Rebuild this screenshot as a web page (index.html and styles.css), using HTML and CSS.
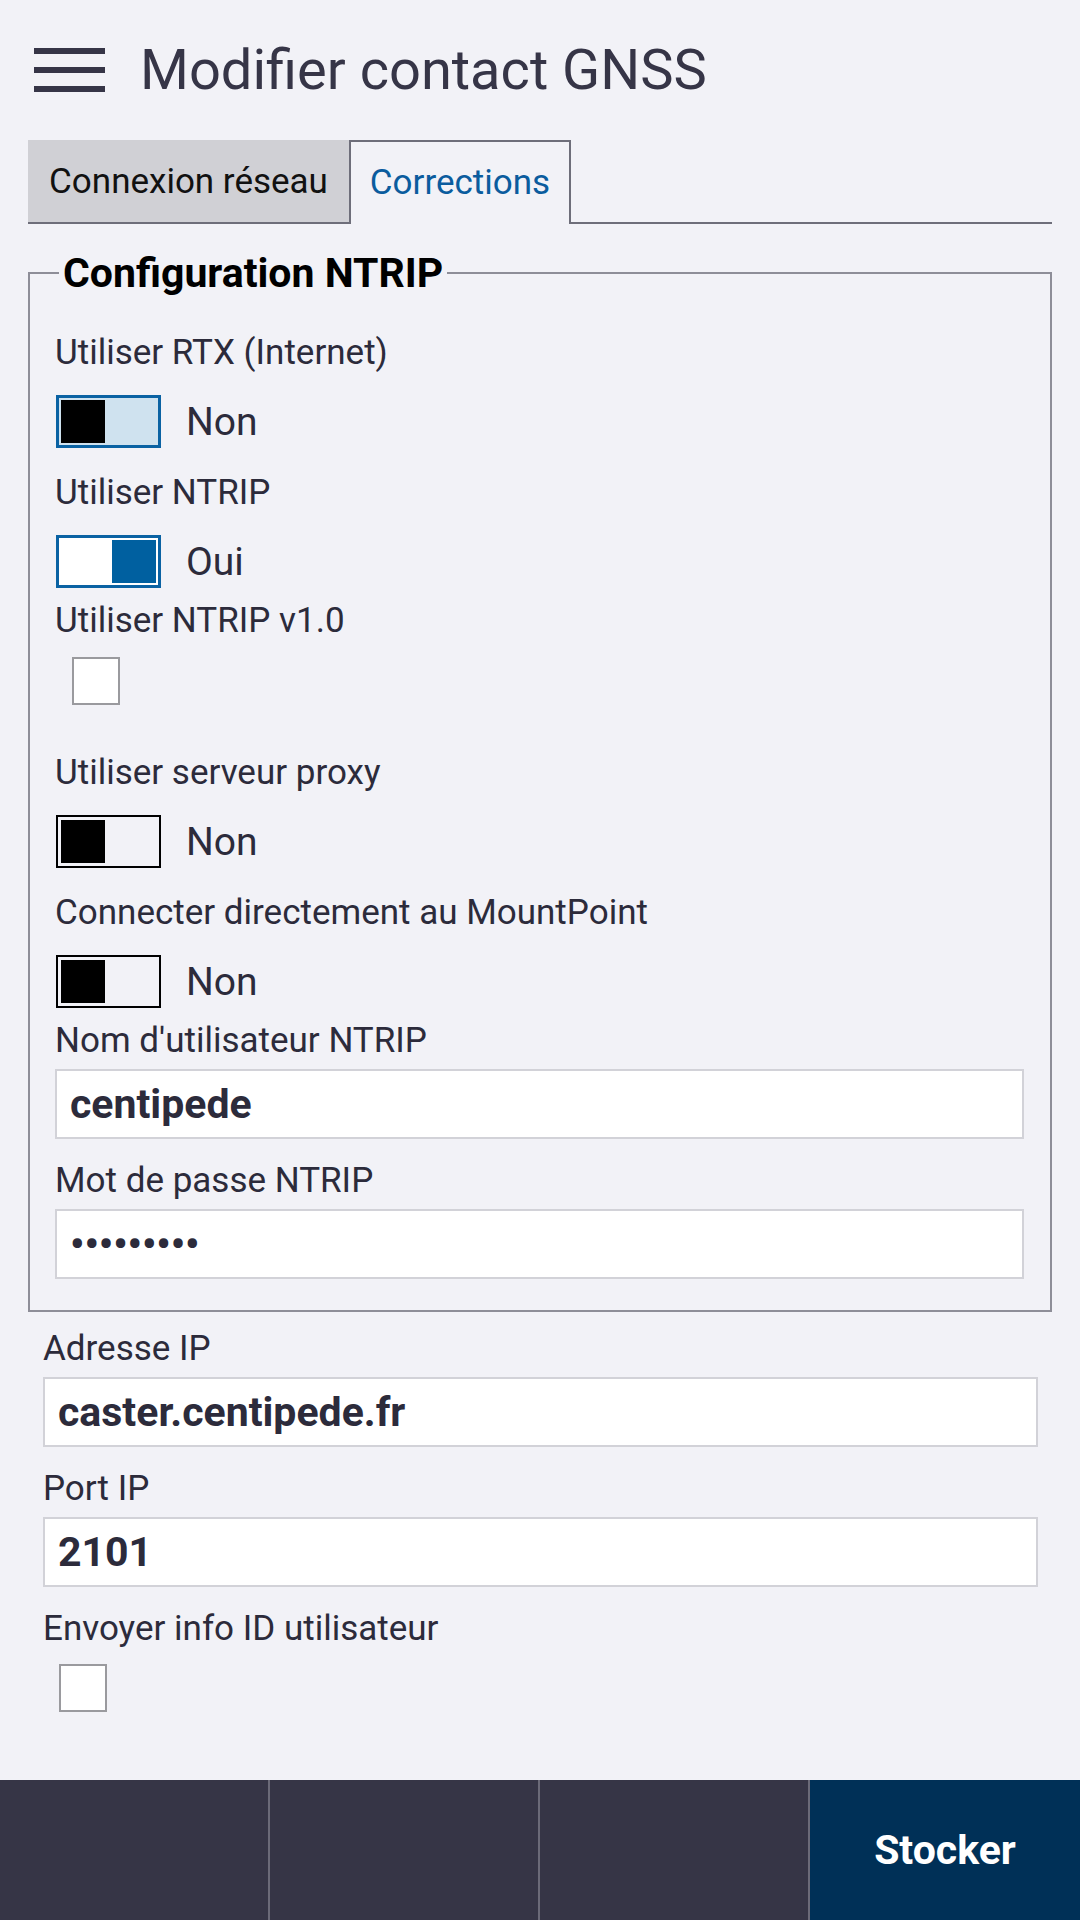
FILE: index.html
```html
<!DOCTYPE html>
<html lang="fr">
<head>
<meta charset="utf-8">
<title>Modifier contact GNSS</title>
<link rel="stylesheet" href="styles.css">
</head>
<body>
<div class="page">
  <div class="main">
    <header class="header">
      <div class="hamburger"><span></span><span></span><span></span></div>
      <h1 class="title">Modifier contact GNSS</h1>
    </header>
    <nav class="tabs">
      <div class="tab tab-inactive">Connexion réseau</div>
      <div class="tab tab-active">Corrections</div>
    </nav>
    <fieldset class="group">
      <legend class="legend">Configuration NTRIP</legend>
      <div class="field first">
        <div class="label">Utiliser RTX (Internet)</div>
        <div class="toggle-row">
          <div class="toggle toggle-focus"><span class="knob"></span></div>
          <span class="toggle-text">Non</span>
        </div>
      </div>
      <div class="field">
        <div class="label">Utiliser NTRIP</div>
        <div class="toggle-row">
          <div class="toggle toggle-on"><span class="knob"></span></div>
          <span class="toggle-text">Oui</span>
        </div>
      </div>
      <div class="field tight">
        <div class="label">Utiliser NTRIP v1.0</div>
        <div class="check-row"><span class="checkbox"></span></div>
      </div>
      <div class="field loose">
        <div class="label">Utiliser serveur proxy</div>
        <div class="toggle-row">
          <div class="toggle"><span class="knob"></span></div>
          <span class="toggle-text">Non</span>
        </div>
      </div>
      <div class="field">
        <div class="label">Connecter directement au MountPoint</div>
        <div class="toggle-row">
          <div class="toggle"><span class="knob"></span></div>
          <span class="toggle-text">Non</span>
        </div>
      </div>
      <div class="field tight">
        <div class="label">Nom d'utilisateur NTRIP</div>
        <div class="input">centipede</div>
      </div>
      <div class="field input-field">
        <div class="label">Mot de passe NTRIP</div>
        <div class="input"><span class="dots">•••••••••</span></div>
      </div>
    </fieldset>
    <section class="outside">
      <div class="field first-out">
        <div class="label">Adresse IP</div>
        <div class="input">caster.centipede.fr</div>
      </div>
      <div class="field input-field">
        <div class="label">Port IP</div>
        <div class="input">2101</div>
      </div>
      <div class="field input-field">
        <div class="label">Envoyer info ID utilisateur</div>
        <div class="check-row check-row-out"><span class="checkbox"></span></div>
      </div>
    </section>
  </div>
  <footer class="bottombar">
    <div class="cell"></div>
    <div class="cell"></div>
    <div class="cell"></div>
    <div class="cell cell-primary">Stocker</div>
  </footer>
</div>
</body>
</html>
```
FILE: styles.css
```css
html, body {
  margin: 0;
  padding: 0;
}
body {
  background: #f2f2f7;
  font-family: Roboto, "Noto Sans", "Liberation Sans", sans-serif;
  color: #2c2b3b;
}
.page {
  width: 1080px;
  height: 1920px;
  display: flex;
  flex-direction: column;
  overflow: hidden;
}
.main {
  flex: 1;
}
.header {
  height: 140px;
  display: flex;
  align-items: center;
  padding-left: 34px;
  box-sizing: border-box;
}
.hamburger {
  width: 71px;
  height: 44px;
  display: flex;
  flex-direction: column;
  justify-content: space-between;
}
.hamburger span {
  display: block;
  height: 6px;
  background: #363547;
}
.title {
  margin: 0 0 0 35px;
  font-size: 56px;
  font-weight: 400;
  line-height: 64px;
  color: #363547;
}
.tabs {
  display: flex;
  margin: 0 28px;
  height: 84px;
  box-sizing: border-box;
  border-bottom: 2px solid #6e6e7a;
}
.tab {
  height: 82px;
  box-sizing: border-box;
  display: flex;
  align-items: center;
  justify-content: center;
  font-size: 35px;
}
.tab-inactive {
  width: 321px;
  background: #d0d0d5;
  color: #111111;
}
.tab-active {
  width: 222px;
  height: 84px;
  margin-bottom: -2px;
  border: 2px solid #6e6e7a;
  border-bottom: none;
  background: #f2f2f7;
  color: #0b5c9e;
  padding-bottom: 2px;
}
.group {
  margin: 26px 28px 0;
  border: 2px solid #8e8e98;
  padding: 0 26px 31px 25px;
  min-width: 0;
}
.legend {
  font-size: 41px;
  line-height: 46px;
  font-weight: 700;
  color: #000000;
  padding: 0 4px;
  margin-left: 4px;
}
.label {
  font-size: 35px;
  line-height: 41px;
  color: #2c2b3b;
  white-space: nowrap;
}
.field {
  margin-top: 24px;
}
.field.first {
  margin-top: 36px;
}
.field.tight {
  margin-top: 12px;
}
.field.loose {
  margin-top: 48px;
}
.field.input-field {
  margin-top: 21px;
}
.field.first-out {
  margin-top: 16px;
}
.toggle-row {
  display: flex;
  align-items: center;
  height: 53px;
  margin-top: 22px;
  padding-left: 1px;
}
.toggle {
  width: 105px;
  height: 53px;
  box-sizing: border-box;
  border: 2px solid #000000;
  padding: 3px;
  display: flex;
  justify-content: flex-start;
  align-items: stretch;
}
.knob {
  display: block;
  width: 44px;
  background: #000000;
}
.toggle-focus {
  border: 3px solid #0a62a3;
  background: #cfe2ef;
  padding: 2px;
}
.toggle-on {
  border: 3px solid #0a62a3;
  background: #ffffff;
  padding: 2px;
  justify-content: flex-end;
}
.toggle-on .knob {
  background: #0060a0;
}
.toggle-text {
  margin-left: 25px;
  font-size: 39px;
  color: #2c2b3b;
}
.check-row {
  margin-top: 16px;
  padding-left: 17px;
  height: 47px;
}
.check-row-out {
  margin-top: 15px;
  padding-left: 16px;
}
.checkbox {
  display: block;
  width: 48px;
  height: 48px;
  box-sizing: border-box;
  border: 2px solid #9a9a9e;
  background: #ffffff;
}
.input {
  margin-top: 8px;
  height: 70px;
  box-sizing: border-box;
  border: 2px solid #d2d2d8;
  background: #ffffff;
  padding-left: 13px;
  display: flex;
  align-items: center;
  font-size: 41px;
  font-weight: 700;
  color: #2c2b3b;
}
.dots {
  font-size: 40px;
  letter-spacing: 0;
}
.outside {
  padding: 0 42px 0 43px;
}
.bottombar {
  height: 140px;
  display: grid;
  grid-template-columns: repeat(4, 270px);
  background: #363546;
}
.cell {
  box-sizing: border-box;
  border-right: 2px solid #6b6a78;
}
.cell-primary {
  border-right: none;
  background: #003057;
  color: #ffffff;
  font-size: 41px;
  font-weight: 700;
  display: flex;
  align-items: center;
  justify-content: center;
}
```
